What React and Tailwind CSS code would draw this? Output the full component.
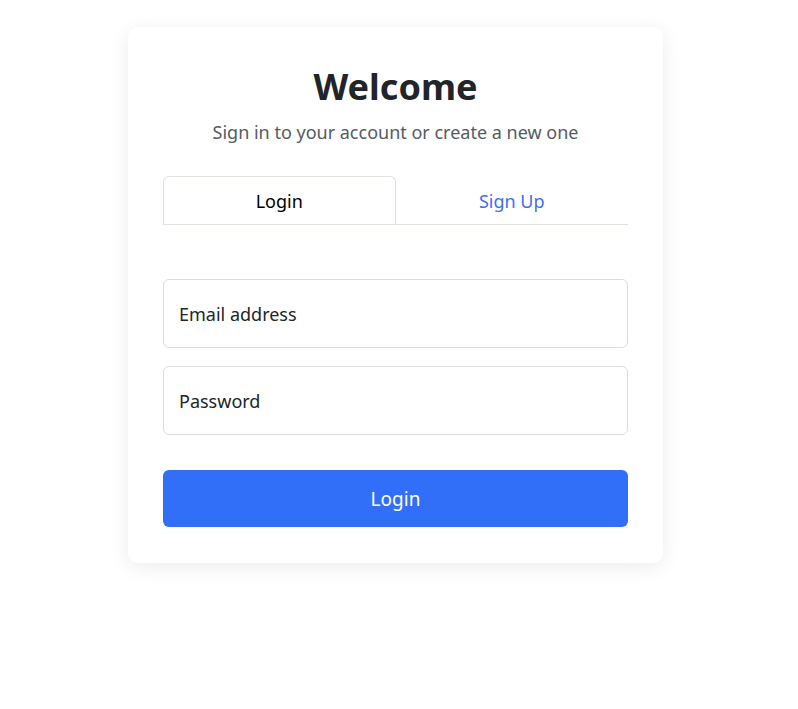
import { useState } from "react"

const App = () => {
  const [tab, setTab] = useState("login")

  return (
    <div className="min-h-screen bg-white pt-[27px] font-['Segoe_UI','Noto_Sans',sans-serif] text-[#212529]">
      <div className="ml-[128px] w-[535px] bg-white rounded-[10px] shadow-[0_4px_20px_rgba(0,0,0,0.08)] px-[35px] pt-[36px] pb-[36px]">
        <h1 className="text-center text-[36px] leading-[48px] font-bold text-[#212529]">Welcome</h1>
        <p className="text-center text-[18px] leading-[24px] text-[#555b62] mt-[9px]">
          Sign in to your account or create a new one
        </p>

        {/* Tabs */}
        <div className="flex mt-[32px] border-b border-[#dee2e6]">
          <button
            onClick={() => setTab("login")}
            className="w-1/2 h-[48px] pt-[2px] -mb-px bg-white border border-[#dee2e6] border-b-white rounded-t-[6px] text-[18px] text-black"
          >
            Login
          </button>
          <button
            onClick={() => setTab("signup")}
            className="w-1/2 h-[48px] pt-[2px] text-[18px] text-[#3d6ff5]"
          >
            Sign Up
          </button>
        </div>

        <form className="mt-[54px]" onSubmit={(e) => e.preventDefault()}>
          <input
            type="email"
            placeholder="Email address"
            className="block w-full h-[69px] px-[15px] border border-[#dcdcdc] rounded-[6px] text-[18px] placeholder:text-[#212529] outline-none"
          />
          <input
            type="password"
            placeholder="Password"
            className="block w-full h-[69px] mt-[18px] px-[15px] border border-[#dcdcdc] rounded-[6px] text-[18px] placeholder:text-[#212529] outline-none"
          />
          <button
            type="submit"
            className="block w-full h-[57px] pt-[2px] mt-[35px] bg-[#316ff9] text-white text-[19px] rounded-[6px]"
          >
            Login
          </button>
        </form>
      </div>
    </div>
  )
}

export default App
